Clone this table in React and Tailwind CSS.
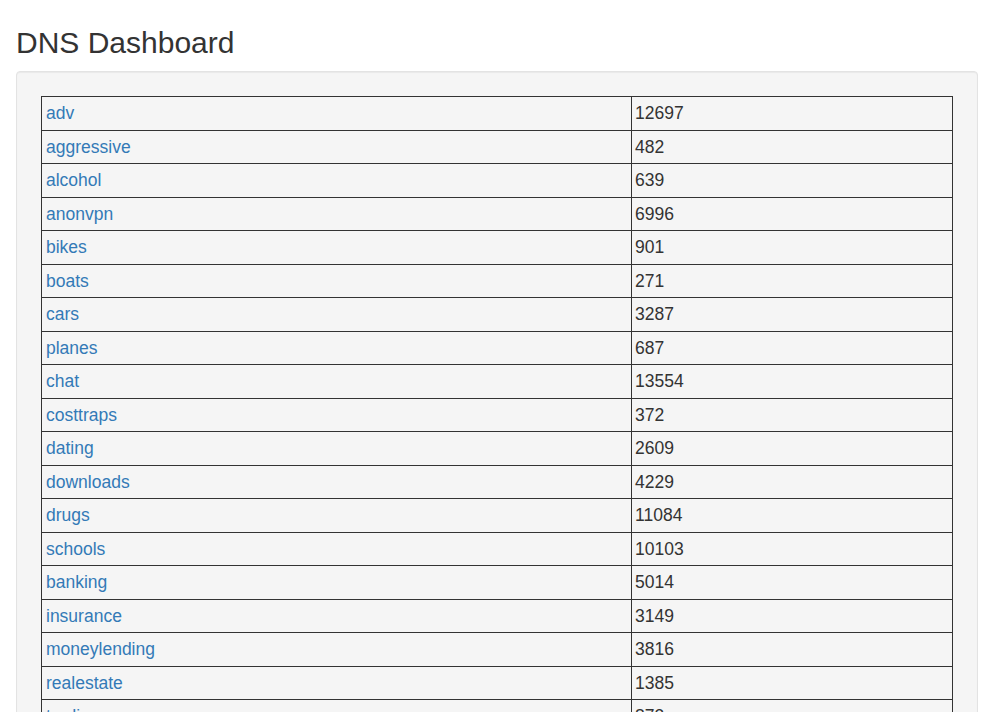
const categories = [
    ['adv', 12697],
    ['aggressive', 482],
    ['alcohol', 639],
    ['anonvpn', 6996],
    ['bikes', 901],
    ['boats', 271],
    ['cars', 3287],
    ['planes', 687],
    ['chat', 13554],
    ['costtraps', 372],
    ['dating', 2609],
    ['downloads', 4229],
    ['drugs', 11084],
    ['schools', 10103],
    ['banking', 5014],
    ['insurance', 3149],
    ['moneylending', 3816],
    ['realestate', 1385],
    ['trading', 873],
    ['gambling', 1540],
];

const App = () => {
    return (
        <div className="min-h-screen bg-white text-[#333] font-['Liberation_Sans',Arial,sans-serif]">
            <div className="pl-[16px] pr-[7px]">
                <h2 className="pt-[26px] mb-[12px] text-[30px] leading-[33px] font-normal">DNS Dashboard</h2>
                <div className="bg-[#f5f5f5] border border-[#e3e3e3] rounded-[4px] shadow-[inset_0_1px_1px_rgba(0,0,0,0.05)] p-[24px]">
                    <table className="w-full border-collapse border border-[#333] text-[17.5px] leading-[22.5px]">
                        <tbody>
                            {categories.map(([name, count]) => (
                                <tr key={name}>
                                    <td className="w-[590px] border border-[#333] py-[5px] pl-[4px]">
                                        <a href="#" className="text-[#337ab7]">{name}</a>
                                    </td>
                                    <td className="border border-[#333] py-[5px] pl-[3px]">{count}</td>
                                </tr>
                            ))}
                        </tbody>
                    </table>
                </div>
            </div>
        </div>
    );
};

export default App;
